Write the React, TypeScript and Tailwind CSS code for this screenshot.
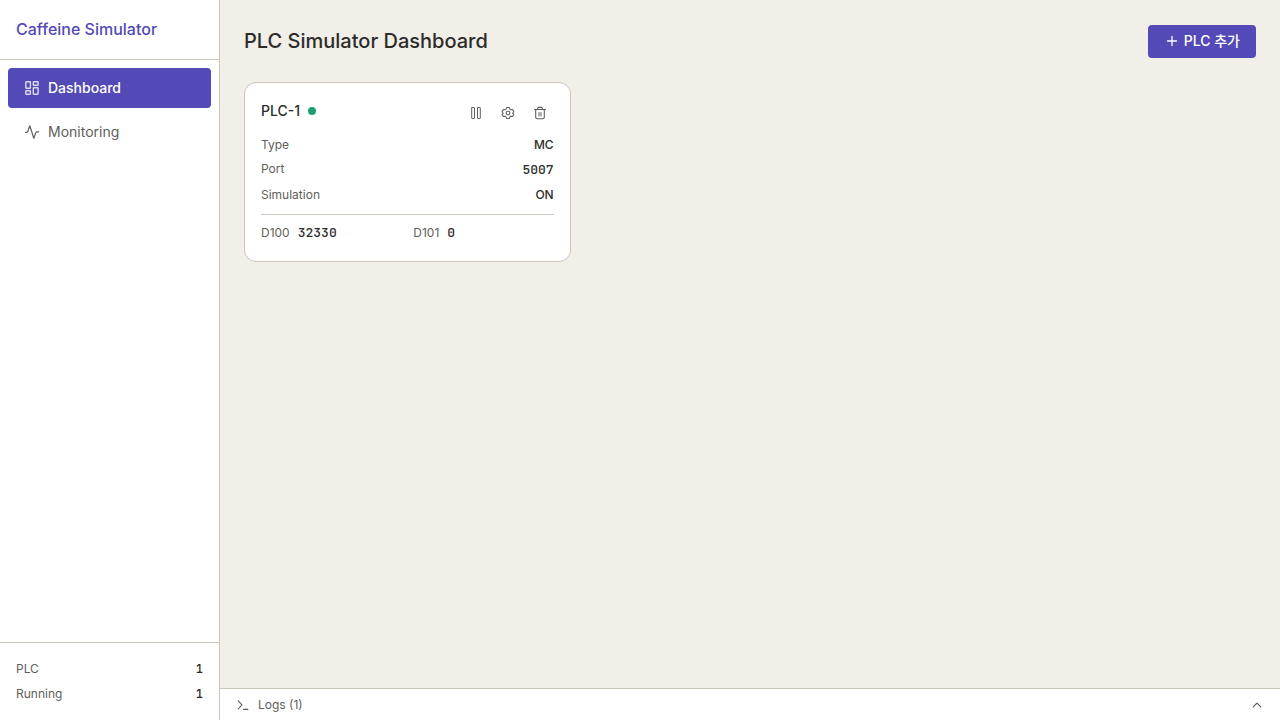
import type { ReactNode } from "react";

const mono = "font-['JetBrains_Mono','Liberation_Mono',monospace]";

function Icon({ children, className = "size-4" }: { children: ReactNode; className?: string }) {
  return (
    <svg
      viewBox="0 0 16 16"
      fill="none"
      stroke="currentColor"
      strokeLinecap="round"
      strokeLinejoin="round"
      className={className}
      aria-hidden="true"
    >
      {children}
    </svg>
  );
}

function DashboardIcon() {
  return (
    <Icon>
      <rect x="1.8" y="1.8" width="4.6" height="6.5" rx="0.6" strokeWidth="1.4" />
      <rect x="9.3" y="1.8" width="4.8" height="3.5" rx="0.6" strokeWidth="1.4" />
      <rect x="1.8" y="10.8" width="4.6" height="3.4" rx="0.6" strokeWidth="1.4" />
      <rect x="9.3" y="7.8" width="4.8" height="6.4" rx="0.6" strokeWidth="1.4" />
    </Icon>
  );
}

function ActivityIcon() {
  return (
    <Icon>
      <path d="M1.4 8.3h1.1c.7 0 1.2-.4 1.4-1L5.8 1.8 9.8 14.2l2-5.6c.2-.5.7-.8 1.2-.8h1.6" strokeWidth="1.2" />
    </Icon>
  );
}

function PauseIcon() {
  return (
    <Icon>
      <rect x="3.7" y="2.5" width="2.8" height="11" rx="0.4" />
      <rect x="9.5" y="2.5" width="2.8" height="11" rx="0.4" />
    </Icon>
  );
}

function GearIcon() {
  return (
    <Icon className="size-3.5">
      <path
        d="M6.3 1.8h3.2l.5 1.8 1.3.8 1.9-.5 1.5 2.6L13.3 8l1.4 1.5-1.5 2.6-1.9-.5-1.3.8-.5 1.8H6.3l-.5-1.8-1.3-.8-1.9.5-1.5-2.6L2.5 8 1.1 6.5l1.5-2.6 1.9.5 1.3-.8z"
        strokeWidth="1.2"
      />
      <circle cx="8" cy="8" r="2.1" strokeWidth="1.2" />
    </Icon>
  );
}

function TrashIcon() {
  return (
    <Icon>
      <path
        d="M2.5 4.5h11M5.5 4.3l.5-1.9h4l.5 1.9M3.7 4.7v7.6c0 .8.5 1.4 1.4 1.4h5.8c.9 0 1.4-.6 1.4-1.4V4.7"
        strokeWidth="1.1"
      />
      <path d="M7 7.5v3.5M9 7.5v3.5" />
    </Icon>
  );
}

const registers = [
  { name: "D100", value: "32330" },
  { name: "D101", value: "0" },
];

const iconButton = "flex size-7 items-center justify-center rounded text-[#5f5e5a] hover:bg-[#f1efe8]";

function PlcCard() {
  return (
    <article className="rounded-xl border border-[#c8c6ba] bg-white p-4">
      <div className="mb-[9px] flex items-start justify-between">
        <div className="flex items-center gap-2">
          <h2 className="text-sm leading-6 font-medium">PLC-1</h2>
          <span className="size-2 rounded-full bg-[#1d9e75]" />
        </div>
        <div className="flex gap-1">
          <button type="button" aria-label="Pause" className={iconButton}>
            <PauseIcon />
          </button>
          <button type="button" aria-label="Settings" className={iconButton}>
            <GearIcon />
          </button>
          <button type="button" aria-label="Delete" className={iconButton}>
            <TrashIcon />
          </button>
        </div>
      </div>

      <dl className="flex flex-col gap-1.5 text-xs leading-[18px]">
        <div className="flex justify-between">
          <dt className="text-[#5f5e5a]">Type</dt>
          <dd className="font-medium">MC</dd>
        </div>
        <div className="flex justify-between">
          <dt className="text-[#5f5e5a]">Port</dt>
          <dd className={`${mono} text-[13px] leading-5 font-medium`}>5007</dd>
        </div>
        <div className="flex justify-between">
          <dt className="text-[#5f5e5a]">Simulation</dt>
          <dd className="font-medium">ON</dd>
        </div>
      </dl>

      <dl className="mt-2.5 grid grid-cols-2 gap-3 border-t border-[#c8c6ba] pt-2 pb-0.5 text-xs leading-5">
        {registers.map((r) => (
          <div key={r.name} className="flex items-baseline gap-2">
            <dt className="text-[#5f5e5a]">{r.name}</dt>
            <dd className={`${mono} text-[13px] leading-5 font-medium`}>{r.value}</dd>
          </div>
        ))}
      </dl>
    </article>
  );
}

function Sidebar() {
  return (
    <aside className="flex w-[220px] shrink-0 flex-col border-r border-[#c8c6ba] bg-white">
      <div className="border-b border-[#c8c6ba] px-4 pt-4 pb-[17px]">
        <p className="text-base leading-[26px] font-medium text-[#534ab7]">Caffeine Simulator</p>
      </div>

      <nav className="flex flex-1 flex-col gap-1 p-2 text-sm">
        <a href="#dashboard" className="flex h-10 items-center gap-2 rounded bg-[#534ab7] px-4 font-medium text-white">
          <span className="opacity-80">
            <DashboardIcon />
          </span>
          Dashboard
        </a>
        <a href="#monitoring" className="flex h-10 items-center gap-2 rounded px-4 text-[#5f5e5a]">
          <ActivityIcon />
          Monitoring
        </a>
      </nav>

      <dl className="flex flex-col gap-[5px] border-t border-[#c8c6ba] p-4 text-xs leading-[19px]">
        <div className="flex items-baseline justify-between">
          <dt className="text-[#5f5e5a]">PLC</dt>
          <dd className={`${mono} font-medium`}>1</dd>
        </div>
        <div className="flex items-baseline justify-between">
          <dt className="text-[#5f5e5a]">Running</dt>
          <dd className={`${mono} font-medium`}>1</dd>
        </div>
      </dl>
    </aside>
  );
}

export default function App() {
  return (
    <div className="flex min-h-screen bg-[#f1efe8] font-[Inter,'Noto_Sans_CJK_KR',sans-serif] text-[#2c2c2a]">
      <Sidebar />

      <div className="flex min-w-0 flex-1 flex-col">
        <main className="flex-1 p-6">
          <header className="mb-6 flex items-center justify-between">
            <h1 className="text-xl leading-[34px] font-medium">PLC Simulator Dashboard</h1>
            <button
              type="button"
              className="flex h-[33px] items-center gap-1 rounded bg-[#534ab7] px-4 text-sm font-medium text-white"
            >
              <Icon>
                <path d="M8 3.5v9M3.5 8h9" strokeWidth="1.3" />
              </Icon>
              PLC 추가
            </button>
          </header>

          <div className="grid grid-cols-[repeat(auto-fill,minmax(320px,1fr))] gap-4">
            <PlcCard />
          </div>
        </main>

        {/* Log panel, collapsed */}
        <button
          type="button"
          className="flex h-8 items-center gap-2 border-t border-[#c8c6ba] bg-white px-4 text-xs text-[#5f5e5a]"
        >
          <span className="flex items-center gap-1.5">
            <Icon>
              <path d="M2.2 3.8 6 7.9 2.2 12M7.3 12.4h4.5" strokeWidth="1.1" />
            </Icon>
            Logs (1)
          </span>
          <Icon className="ml-auto size-3.5">
            <path d="M3.7 10.2 8 5.8l4.3 4.4" strokeWidth="1.4" />
          </Icon>
        </button>
      </div>
    </div>
  );
}
